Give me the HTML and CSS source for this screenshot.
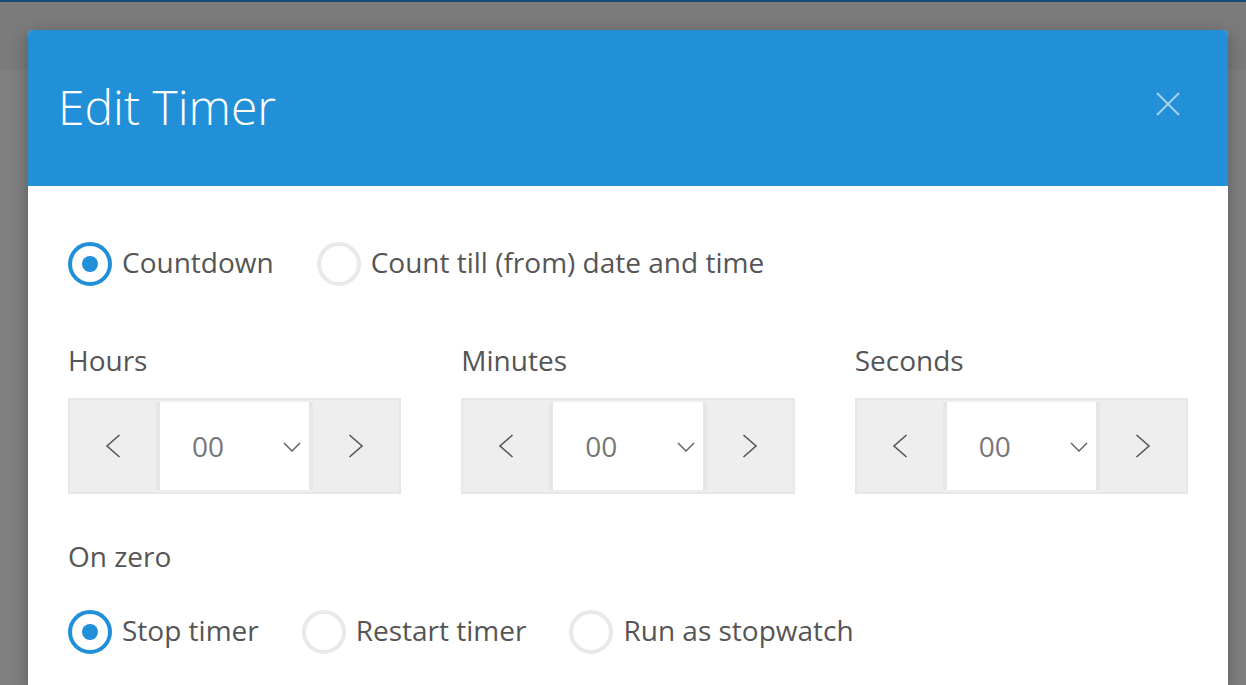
FILE: index.html
```html
<!DOCTYPE html>
<html lang="en">
<head>
<meta charset="utf-8">
<title>Edit Timer</title>
<link rel="stylesheet" href="styles.css">
</head>
<body>
<div class="page">
  <div class="page-top"></div>
</div>
<div class="modal">
  <div class="modal-header">
    <h1 class="modal-title">Edit Timer</h1>
    <button class="close" aria-label="Close">
      <svg width="24" height="24" viewBox="0 0 24 24"><path d="M1 1L23 23M23 1L1 23" stroke="currentColor" stroke-width="2" fill="none"/></svg>
    </button>
  </div>
  <div class="modal-body">
    <div class="radio-row">
      <label class="radio checked"><span class="dot"></span><span class="radio-text">Countdown</span></label>
      <label class="radio"><span class="dot"></span><span class="radio-text">Count till (from) date and time</span></label>
    </div>

    <div class="fields">
      <div class="field">
        <div class="field-label">Hours</div>
        <div class="spinner">
          <button class="spin-btn"><svg width="16" height="24" viewBox="0 0 16 24"><path d="M14.5 1L2 12L14.5 23" stroke="currentColor" stroke-width="1.6" fill="none"/></svg></button>
          <div class="select"><span class="value">00</span><svg class="caret" width="18" height="10" viewBox="0 0 18 10"><path d="M1 1L9 9L17 1" stroke="currentColor" stroke-width="1.5" fill="none"/></svg></div>
          <button class="spin-btn"><svg width="16" height="24" viewBox="0 0 16 24"><path d="M1.5 1L14 12L1.5 23" stroke="currentColor" stroke-width="1.6" fill="none"/></svg></button>
        </div>
      </div>
      <div class="field">
        <div class="field-label">Minutes</div>
        <div class="spinner">
          <button class="spin-btn"><svg width="16" height="24" viewBox="0 0 16 24"><path d="M14.5 1L2 12L14.5 23" stroke="currentColor" stroke-width="1.6" fill="none"/></svg></button>
          <div class="select"><span class="value">00</span><svg class="caret" width="18" height="10" viewBox="0 0 18 10"><path d="M1 1L9 9L17 1" stroke="currentColor" stroke-width="1.5" fill="none"/></svg></div>
          <button class="spin-btn"><svg width="16" height="24" viewBox="0 0 16 24"><path d="M1.5 1L14 12L1.5 23" stroke="currentColor" stroke-width="1.6" fill="none"/></svg></button>
        </div>
      </div>
      <div class="field">
        <div class="field-label">Seconds</div>
        <div class="spinner">
          <button class="spin-btn"><svg width="16" height="24" viewBox="0 0 16 24"><path d="M14.5 1L2 12L14.5 23" stroke="currentColor" stroke-width="1.6" fill="none"/></svg></button>
          <div class="select"><span class="value">00</span><svg class="caret" width="18" height="10" viewBox="0 0 18 10"><path d="M1 1L9 9L17 1" stroke="currentColor" stroke-width="1.5" fill="none"/></svg></div>
          <button class="spin-btn"><svg width="16" height="24" viewBox="0 0 16 24"><path d="M1.5 1L14 12L1.5 23" stroke="currentColor" stroke-width="1.6" fill="none"/></svg></button>
        </div>
      </div>
    </div>

    <div class="section-label">On zero</div>
    <div class="radio-row">
      <label class="radio checked"><span class="dot"></span><span class="radio-text">Stop timer</span></label>
      <label class="radio"><span class="dot"></span><span class="radio-text">Restart timer</span></label>
      <label class="radio"><span class="dot"></span><span class="radio-text">Run as stopwatch</span></label>
    </div>
  </div>
</div>
</body>
</html>
```
FILE: styles.css
```css
html, body {
  margin: 0;
  padding: 0;
  height: 100%;
  overflow: hidden;
}
body {
  background: #808080;
  font-family: "Open Sans", "Noto Sans", sans-serif;
  color: #555;
}
.page-top {
  height: 70px;
  background: #7b7b7b;
  border-top: 2px solid #164a72;
  box-sizing: border-box;
}
.modal {
  position: absolute;
  top: 30px;
  left: 28px;
  width: 1200px;
  height: 655px;
  background: #fff;
  border-radius: 5px 5px 0 0;
  box-shadow: 0 5px 18px rgba(0, 0, 0, 0.3);
  overflow: hidden;
}
.modal-header {
  height: 156px;
  background: #2190d8;
  display: flex;
  align-items: center;
  justify-content: space-between;
  padding: 0 48px 0 30px;
  box-sizing: border-box;
}
.modal-title {
  margin: 0;
  font-size: 48px;
  font-weight: 300;
  color: #fff;
  line-height: 1;
  padding-bottom: 2px;
}
.close {
  background: none;
  border: 0;
  padding: 0;
  width: 24px;
  height: 24px;
  color: rgba(255, 255, 255, 0.6);
  margin-bottom: 8px;
}
.close svg { display: block; }
.modal-body {
  padding: 56px 40px 0 40px;
}
.radio-row {
  display: flex;
  align-items: center;
  gap: 43px;
  height: 44px;
}
.radio {
  display: flex;
  align-items: center;
  gap: 10px;
  font-size: 28px;
  color: #555;
}
.radio-text {
  margin-bottom: 4px;
}
.dot {
  width: 44px;
  height: 44px;
  box-sizing: border-box;
  border: 4px solid #e9e9e9;
  border-radius: 50%;
  display: flex;
  align-items: center;
  justify-content: center;
  flex: none;
}
.radio.checked .dot {
  border-color: #2190d8;
}
.radio.checked .dot::after {
  content: "";
  width: 16px;
  height: 16px;
  border-radius: 50%;
  background: #2190d8;
}
.fields {
  display: grid;
  grid-template-columns: repeat(3, 1fr);
  gap: 60px;
  margin-top: 55px;
}
.field-label, .section-label {
  font-size: 28px;
  line-height: 38px;
  color: #555;
}
.spinner {
  margin-top: 19px;
  height: 96px;
  box-sizing: border-box;
  border: 2px solid #e7e7e7;
  background: #eeeeee;
  display: flex;
}
.spin-btn {
  width: 86px;
  flex: none;
  border: 0;
  padding: 0;
  background: #eeeeee;
  color: #555;
  display: flex;
  align-items: center;
  justify-content: center;
}
.spin-btn svg { display: block; }
.select {
  flex: 1;
  margin: 2px 0;
  border-left: 4px solid #e7e7e7;
  border-right: 4px solid #e7e7e7;
  background: #fff;
  display: flex;
  align-items: center;
  justify-content: space-between;
  padding: 0 8px 0 32px;
}
.value {
  font-size: 28px;
  color: #777;
  line-height: 1;
}
.caret {
  color: #666;
  display: block;
  margin-top: 2px;
}
.section-label {
  margin-top: 43px;
}
.section-label + .radio-row {
  margin-top: 35px;
}
```
